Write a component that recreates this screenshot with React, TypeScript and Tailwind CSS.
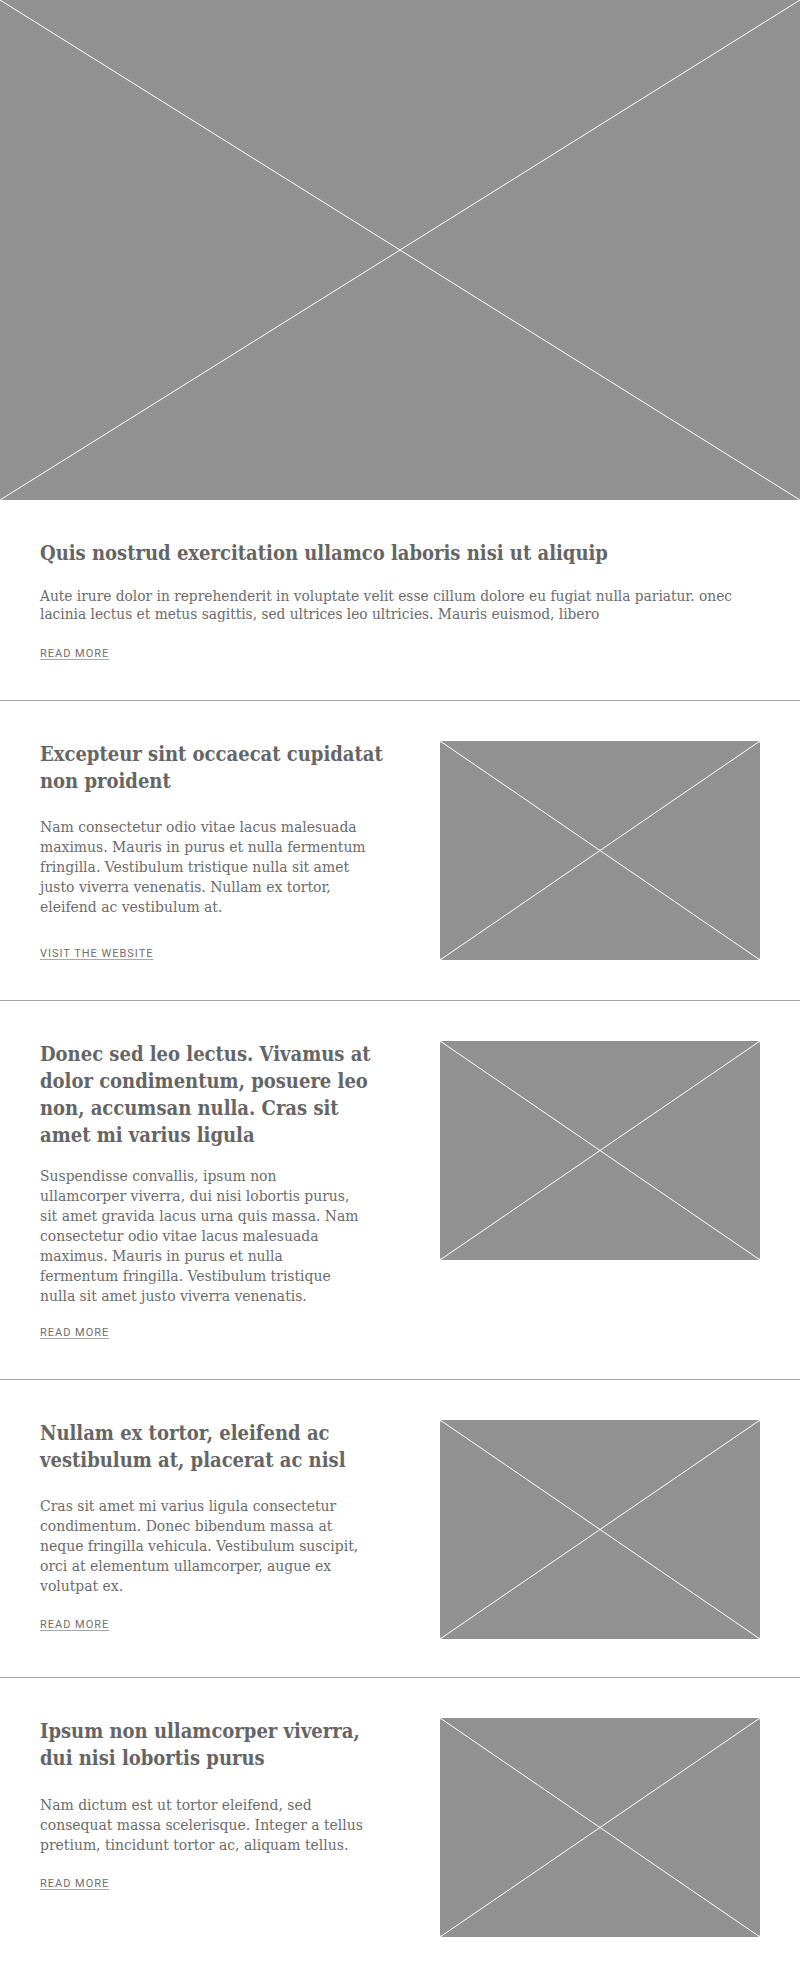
import { FC } from "react";

const serif = "font-['DejaVu_Serif_Condensed','DejaVu_Serif',serif]";

const Placeholder: FC<{ className?: string }> = ({ className }) => (
  <div className={`relative overflow-hidden bg-[#919191] ${className ?? ""}`}>
    <svg className="absolute inset-0 h-full w-full" viewBox="0 0 100 100" preserveAspectRatio="none">
      <line x1="0" y1="0" x2="100" y2="100" stroke="#fff" strokeWidth="1" vectorEffect="non-scaling-stroke" />
      <line x1="100" y1="0" x2="0" y2="100" stroke="#fff" strokeWidth="1" vectorEffect="non-scaling-stroke" />
    </svg>
  </div>
);

interface Item {
  title: string[];
  body: string[];
  link: string;
  bodyGap: string;
  linkGap: string;
  pad: string;
}

const items: Item[] = [
  {
    title: ["Excepteur sint occaecat cupidatat", "non proident"],
    body: [
      "Nam consectetur odio vitae lacus malesuada",
      "maximus. Mauris in purus et nulla fermentum",
      "fringilla. Vestibulum tristique nulla sit amet",
      "justo viverra venenatis. Nullam ex tortor,",
      "eleifend ac vestibulum at.",
    ],
    link: "Visit the website",
    bodyGap: "mt-[23px]",
    linkGap: "mt-[29px]",
    pad: "pt-10 pb-[38px]",
  },
  {
    title: ["Donec sed leo lectus. Vivamus at", "dolor condimentum, posuere leo", "non, accumsan nulla. Cras sit", "amet mi varius ligula"],
    body: [
      "Suspendisse convallis, ipsum non",
      "ullamcorper viverra, dui nisi lobortis purus,",
      "sit amet gravida lacus urna quis massa. Nam",
      "consectetur odio vitae lacus malesuada",
      "maximus. Mauris in purus et nulla",
      "fermentum fringilla. Vestibulum tristique",
      "nulla sit amet justo viverra venenatis.",
    ],
    link: "Read more",
    bodyGap: "mt-[18px]",
    linkGap: "mt-[19px]",
    pad: "pt-10 pb-[38px]",
  },
  {
    title: ["Nullam ex tortor, eleifend ac", "vestibulum at, placerat ac nisl"],
    body: [
      "Cras sit amet mi varius ligula consectetur",
      "condimentum. Donec bibendum massa at",
      "neque fringilla vehicula. Vestibulum suscipit,",
      "orci at elementum ullamcorper, augue ex",
      "volutpat ex.",
    ],
    link: "Read more",
    bodyGap: "mt-[22px]",
    linkGap: "mt-[21px]",
    pad: "pt-10 pb-[38px]",
  },
  {
    title: ["Ipsum non ullamcorper viverra,", "dui nisi lobortis purus"],
    body: [
      "Nam dictum est ut tortor eleifend, sed",
      "consequat massa scelerisque. Integer a tellus",
      "pretium, tincidunt tortor ac, aliquam tellus.",
    ],
    link: "Read more",
    bodyGap: "mt-[23px]",
    linkGap: "mt-[21px]",
    pad: "pt-10 pb-10",
  },
];

const Lines: FC<{ lines: string[] }> = ({ lines }) => (
  <>
    {lines.map((l, i) => (
      <span key={i} className="block whitespace-nowrap">
        {l}
      </span>
    ))}
  </>
);

const MoreLink: FC<{ label: string; className?: string }> = ({ label, className }) => (
  <a
    href="#"
    className={`block w-fit font-['Roboto',sans-serif] text-[11px] leading-4 uppercase tracking-[0.09em] text-[#6f6f6f] underline decoration-[#a8a8a8] underline-offset-2 ${className ?? ""}`}
  >
    {label}
  </a>
);

export default function App() {
  return (
    <div className="w-[800px] bg-white">
      <Placeholder className="h-[500px] w-full" />

      <section className="border-b border-[#a3a3a3] px-10 pt-10 pb-[38px]">
        <h2 className={`${serif} text-[20px] leading-[27px] font-bold text-[#656565]`}>
          Quis nostrud exercitation ullamco laboris nisi ut aliquip
        </h2>
        <p className={`${serif} mt-5 text-[15.3px] leading-[18px] text-[#6b6b6b]`}>
          <Lines
            lines={[
              "Aute irure dolor in reprehenderit in voluptate velit esse cillum dolore eu fugiat nulla pariatur. onec",
              "lacinia lectus et metus sagittis, sed ultrices leo ultricies. Mauris euismod, libero",
            ]}
          />
        </p>
        <MoreLink label="Read more" className="mt-[23px]" />
      </section>

      {items.map((item, i) => (
        <section
          key={i}
          className={`flex items-start gap-[60px] px-10 ${item.pad} ${i < items.length - 1 ? "border-b border-[#a3a3a3]" : ""}`}
        >
          <div className="w-[340px]">
            <h2 className={`${serif} text-[20px] leading-[26.7px] font-bold text-[#656565]`}>
              <Lines lines={item.title} />
            </h2>
            <p className={`${serif} ${item.bodyGap} text-[15.5px] leading-5 text-[#6b6b6b]`}>
              <Lines lines={item.body} />
            </p>
            <MoreLink label={item.link} className={item.linkGap} />
          </div>
          <Placeholder className="h-[219px] w-[320px] shrink-0 rounded-[3px]" />
        </section>
      ))}
    </div>
  );
}
